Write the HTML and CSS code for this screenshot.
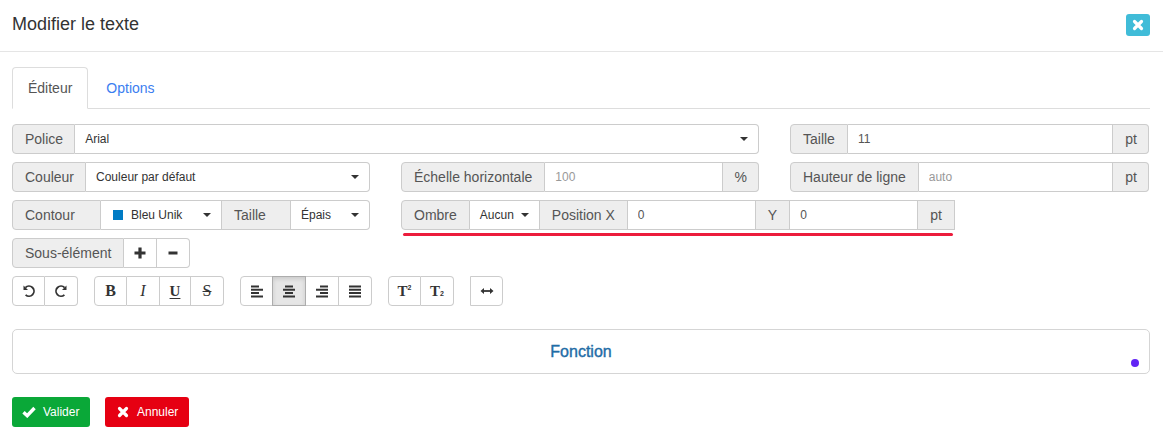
FILE: index.html
```html
<!DOCTYPE html>
<html lang="fr">
<head>
    <meta charset="UTF-8">
    <meta name="viewport" content="width=device-width, initial-scale=1.0">
    <title>Modifier le texte</title>
    <link rel="stylesheet" href="styles.css">
</head>
<body>

<header class="modal-header">
    <h1>Modifier le texte</h1>
    <button class="close-button" aria-label="Fermer">
        <svg width="12" height="12" viewBox="0 0 12 12"><path d="M2.500 2.500l7 7M9.500 2.500l-7 7" stroke="#fff" stroke-width="3.200" stroke-linecap="round"/></svg>
    </button>
</header>

<main class="modal-body">
    <nav class="tabs">
        <a href="#" class="tab active">Éditeur</a>
        <a href="#" class="tab">Options</a>
    </nav>

    <div class="form-grid">
        <div class="group span-2">
            <span class="addon">Police</span>
            <div class="select grow"><span>Arial</span><i class="caret"></i></div>
        </div>
        <div class="group">
            <span class="addon addon-wide">Taille</span>
            <input type="text" value="11">
            <span class="addon">pt</span>
        </div>

        <div class="group">
            <span class="addon">Couleur</span>
            <div class="select grow"><span>Couleur par défaut</span><i class="caret"></i></div>
        </div>
        <div class="group">
            <span class="addon addon-wide">Échelle horizontale</span>
            <input type="text" placeholder="100">
            <span class="addon">%</span>
        </div>
        <div class="group">
            <span class="addon addon-wide">Hauteur de ligne</span>
            <input type="text" placeholder="auto">
            <span class="addon">pt</span>
        </div>

        <div class="group">
            <span class="addon addon-contour">Contour</span>
            <div class="select contour-select"><span class="swatch"></span><span>Bleu Unik</span><i class="caret"></i></div>
            <span class="addon addon-size">Taille</span>
            <div class="select grow"><span>Épais</span><i class="caret"></i></div>
        </div>
        <div class="group span-2 shadow-group">
            <span class="addon">Ombre</span>
            <div class="select shadow-select"><span>Aucun</span><i class="caret"></i></div>
            <span class="addon">Position X</span>
            <input type="text" class="short" value="0">
            <span class="addon">Y</span>
            <input type="text" class="short" value="0">
            <span class="addon">pt</span>
            <span class="red-mark"></span>
        </div>

        <div class="group span-3 sub-group">
            <span class="addon">Sous-élément</span>
            <button class="tool">
                <svg width="14" height="14" viewBox="0 0 14 14"><path d="M7 1.500v11M1.500 7h11" stroke="#333" stroke-width="3.200"/></svg>
            </button>
            <button class="tool">
                <svg width="14" height="14" viewBox="0 0 14 14"><path d="M2.500 7h9" stroke="#333" stroke-width="3"/></svg>
            </button>
        </div>
    </div>

    <div class="toolbar">
        <div class="group">
            <button class="tool">
                <svg width="14" height="14" viewBox="0 0 14 14" fill="none"><path d="M3.400 3.600A5 5 0 1 1 3.600 10.800" stroke="#333" stroke-width="1.800"/><path d="M1.500 1.500v4.500H6z" fill="#333"/></svg>
            </button>
            <button class="tool">
                <svg width="14" height="14" viewBox="0 0 14 14" fill="none"><path d="M10.600 3.600A5 5 0 1 0 10.400 10.800" stroke="#333" stroke-width="1.800"/><path d="M12.500 1.500v4.500H8z" fill="#333"/></svg>
            </button>
        </div>
        <div class="group">
            <button class="tool letter bold">B</button>
            <button class="tool letter italic">I</button>
            <button class="tool tool-narrow letter underline">U</button>
            <button class="tool letter strike">S</button>
        </div>
        <div class="group">
            <button class="tool">
                <svg width="14" height="13" viewBox="0 0 14 13"><path d="M1 1.500h8M1 4.800h12M1 8.100h8M1 11.400h12" stroke="#333" stroke-width="2"/></svg>
            </button>
            <button class="tool pressed">
                <svg width="14" height="13" viewBox="0 0 14 13"><path d="M3 1.500h8M1 4.800h12M3 8.100h8M1 11.400h12" stroke="#333" stroke-width="2"/></svg>
            </button>
            <button class="tool">
                <svg width="14" height="13" viewBox="0 0 14 13"><path d="M5 1.500h8M1 4.800h12M5 8.100h8M1 11.400h12" stroke="#333" stroke-width="2"/></svg>
            </button>
            <button class="tool">
                <svg width="14" height="13" viewBox="0 0 14 13"><path d="M1 1.500h12M1 4.800h12M1 8.100h12M1 11.400h12" stroke="#333" stroke-width="2"/></svg>
            </button>
        </div>
        <div class="group">
            <button class="tool letter script bold">T<sup>2</sup></button>
            <button class="tool letter script bold">T<sub>2</sub></button>
        </div>
        <div class="group">
            <button class="tool">
                <svg width="14" height="8" viewBox="0 0 14 8"><path d="M3 4h8" stroke="#333" stroke-width="1.800"/><path d="M0.500 4L4 1v6zM13.500 4L10 1v6z" fill="#333"/></svg>
            </button>
        </div>
    </div>

    <div class="preview">
        <span>Fonction</span>
        <i class="dot"></i>
    </div>

    <div class="actions">
        <button class="action valid">
            <svg width="14" height="12" viewBox="0 0 14 12" fill="none"><path d="M1.500 6.200L5.200 9.700L12.500 2" stroke="#fff" stroke-width="3.400"/></svg>
            Valider
        </button>
        <button class="action cancel">
            <svg width="12" height="12" viewBox="0 0 12 12"><path d="M2.500 2.500l7 7M9.500 2.500l-7 7" stroke="#fff" stroke-width="3.200" stroke-linecap="round"/></svg>
            Annuler
        </button>
    </div>
</main>

</body>
</html>
```

FILE: styles.css
```css
* {
    box-sizing: border-box;
}

body {
    font-family: "Liberation Sans", Arial, sans-serif;
    background-color: white;
    margin: 0;
    padding: 0;
    color: #333;
    font-size: 14px;
}

.modal-header {
    height: 52px;
    padding: 0 13px 0 12px;
    display: flex;
    align-items: center;
    justify-content: space-between;
    border-bottom: 1px solid #e5e5e5;
}

.modal-header h1 {
    margin: 0 0 3px;
    font-size: 18px;
    font-weight: normal;
    color: #333;
}

.close-button {
    width: 24px;
    height: 22px;
    margin-bottom: 2px;
    padding: 0;
    border: none;
    border-radius: 3px;
    background-color: #40bcd8;
    display: flex;
    align-items: center;
    justify-content: center;
}

.modal-body {
    padding: 15px 13px 0 12px;
}

.tabs {
    display: flex;
    gap: 2px;
    height: 42px;
    border-bottom: 1px solid #ddd;
}

.tab {
    height: 42px;
    padding: 12px 15px 0;
    text-decoration: none;
    color: #3b7ef0;
    border: 1px solid transparent;
    border-radius: 4px 4px 0 0;
}

.tab.active {
    color: #555;
    background-color: white;
    border-color: #ddd #ddd white;
}

.form-grid {
    display: grid;
    grid-template-columns: 358px 358px 359px;
    column-gap: 31px;
    row-gap: 8px;
    margin-top: 15px;
}

.span-2 {
    grid-column: span 2;
}

.span-3 {
    grid-column: span 3;
}

.group {
    display: flex;
    height: 30px;
}

.group > * {
    border: 1px solid #ccc;
    border-left: none;
}

.group > :first-child {
    border-left: 1px solid #ccc;
    border-radius: 4px 0 0 4px;
}

.group > :last-child {
    border-radius: 0 4px 4px 0;
}

.addon {
    flex: none;
    padding: 0 11px 0 12px;
    line-height: 28px;
    color: #555;
    background-color: #eee;
}

.addon-wide {
    padding-right: 12px;
}

.addon-contour {
    width: 89px;
}

.addon-size {
    width: 69px;
}

.select {
    display: flex;
    align-items: center;
    padding: 0 10px;
    font-size: 12px;
    color: #333;
    background-color: white;
}

.grow {
    flex: 1;
    min-width: 0;
}

.caret {
    margin-left: auto;
    border-top: 4px solid #333;
    border-left: 4px solid transparent;
    border-right: 4px solid transparent;
}

.contour-select {
    flex: none;
    width: 121px;
    padding: 0 10px 0 12px;
}

.swatch {
    width: 10px;
    height: 10px;
    margin-right: 8px;
    background-color: #007bc4;
}

.shadow-group {
    position: relative;
    width: 554px;
}

.shadow-group .addon {
    padding: 0 12px;
}

.shadow-group .addon:nth-last-child(2) {
    flex: 1;
}

.shadow-select {
    flex: none;
    width: 70px;
}

.sub-group .addon {
    width: 112px;
    padding: 0 0 0 12px;
}

/* trait rouge par-dessus le groupe */
.red-mark {
    position: absolute;
    left: 2px;
    right: 2px;
    top: 33px;
    height: 3px;
    border: none !important;
    border-radius: 2px !important;
    background-color: #ec1c3c;
}

input {
    flex: 1;
    min-width: 0;
    padding: 0 10px;
    font-family: inherit;
    font-size: 12px;
    color: #555;
    background-color: white;
    outline: none;
    border-radius: 0;
}

input::placeholder {
    color: #999;
    opacity: 1;
}

input.short {
    flex: none;
    width: 128px;
}

.tool {
    width: 33px;
    height: 30px;
    padding: 0;
    background-color: white;
    color: #333;
    display: flex;
    align-items: center;
    justify-content: center;
}

.tool-narrow {
    width: 31px;
}

.tool.pressed {
    background-color: #e6e6e6;
    border-color: #adadad;
    box-shadow: inset 0 2px 4px rgba(0, 0, 0, 0.125);
    border-left: 1px solid #adadad;
    margin-left: -1px;
    width: 34px;
}

.letter {
    font-family: "Liberation Serif", serif;
    font-size: 16px;
}

.letter.script {
    font-size: 15px;
}

.letter sup,
.letter sub {
    font-family: "Liberation Sans", sans-serif;
    font-size: 7px;
    line-height: 1;
}

.letter sup {
    align-self: flex-start;
    margin-top: 7px;
}

.letter sub {
    align-self: flex-end;
    margin-bottom: 8px;
}

.bold {
    font-weight: bold;
}

.italic {
    font-style: italic;
}

.underline {
    font-size: 15px;
    font-weight: bold;
    text-decoration: underline;
    text-underline-offset: 2px;
}

.strike {
    text-decoration: line-through;
}

.toolbar {
    display: flex;
    gap: 16px;
    margin-top: 8px;
}

.preview {
    position: relative;
    height: 45px;
    margin-top: 23px;
    border: 1px solid #d5d5d5;
    border-radius: 5px;
    display: flex;
    align-items: center;
    justify-content: center;
    font-size: 16px;
    color: #1f6da6;
    -webkit-text-stroke: 0.4px #1f6da6;
}

.dot {
    position: absolute;
    right: 10px;
    bottom: 6px;
    width: 8px;
    height: 8px;
    border-radius: 50%;
    background-color: #6224f5;
}

.actions {
    display: flex;
    gap: 15px;
    margin-top: 23px;
}

.action {
    height: 30px;
    padding: 0 10px;
    border: none;
    border-radius: 3px;
    color: white;
    font-family: inherit;
    font-size: 12px;
    display: flex;
    align-items: center;
    gap: 7px;
}

.action.valid {
    width: 78px;
    background-color: #0aa838;
}

.action.cancel {
    width: 84px;
    padding-left: 12px;
    gap: 8px;
    background-color: #e60012;
}
```
